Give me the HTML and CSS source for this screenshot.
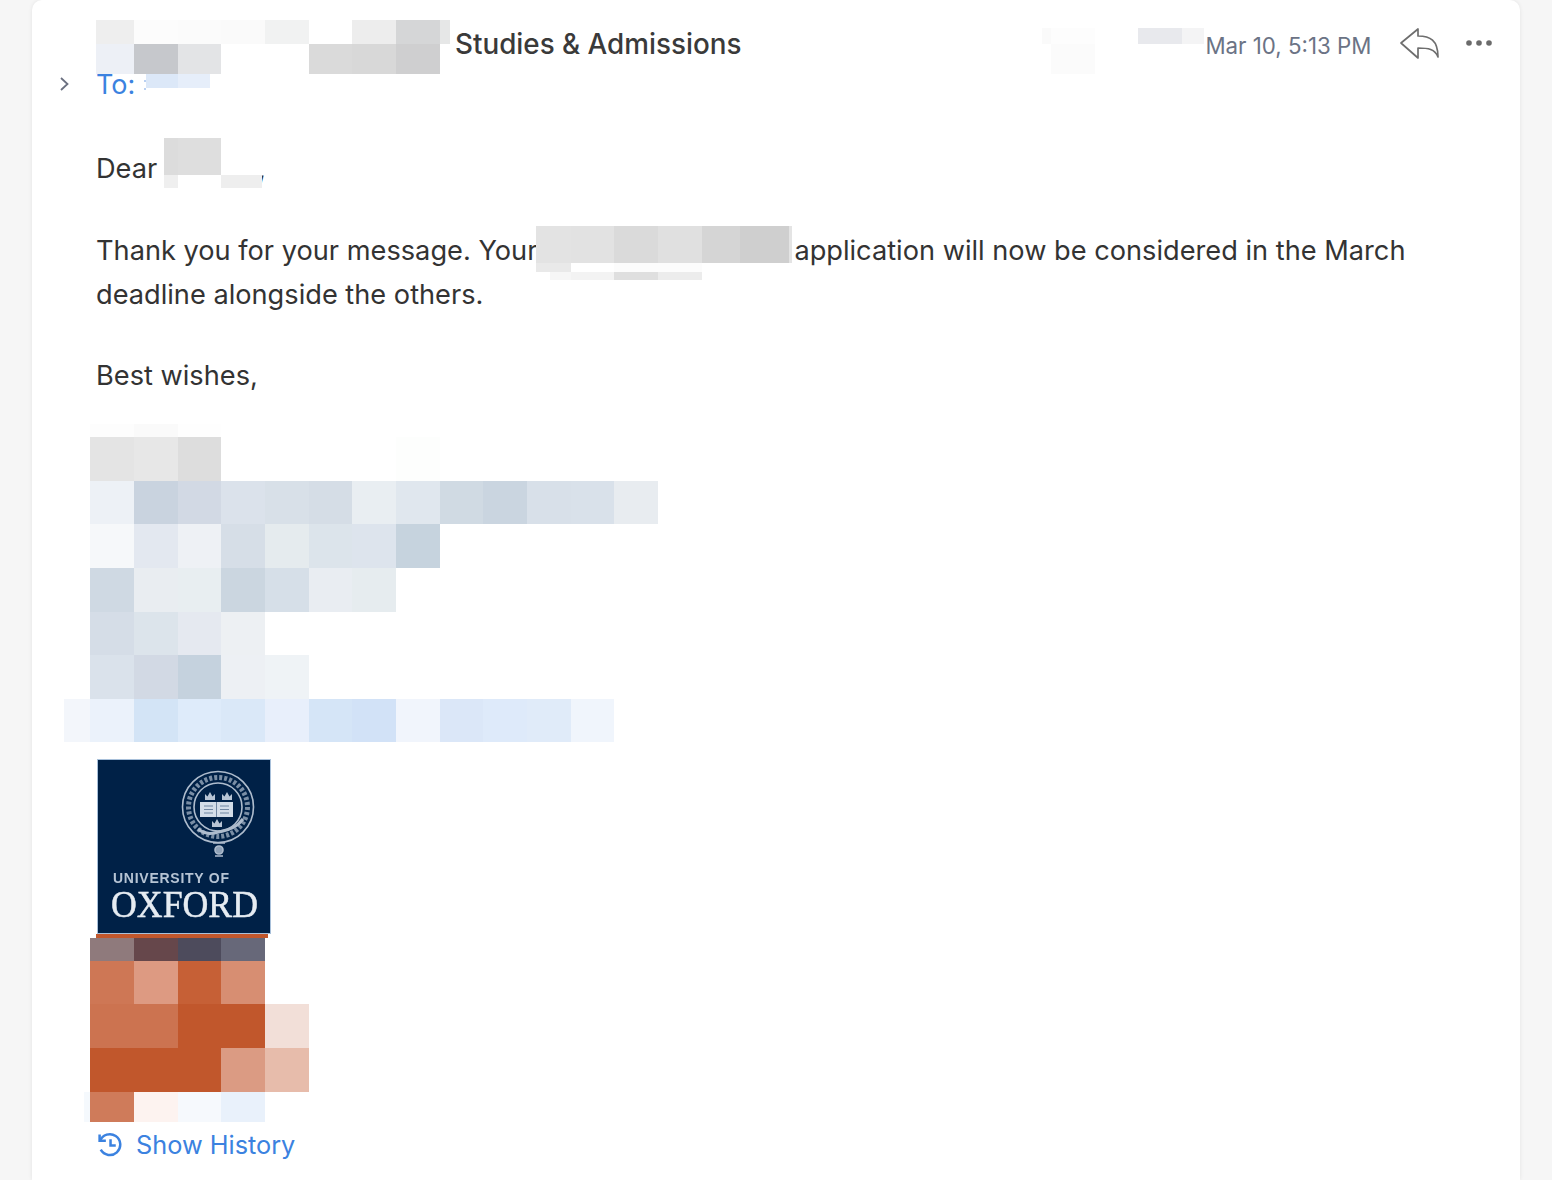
FILE: index.html
```html
<!DOCTYPE html>
<html lang="en">
<head>
<meta charset="utf-8">
<title>Message</title>
<link rel="stylesheet" href="styles.css">
</head>
<body>
<main class="card">
  <header class="head">
    <svg class="mosaic m-sender" viewBox="96 20 354 54" aria-hidden="true">
      <rect x="96" y="20" width="38" height="24" fill="#eeeeee"/><rect x="134" y="20" width="44" height="24" fill="#fcfcfc"/><rect x="178" y="20" width="43" height="24" fill="#fbfbfb"/><rect x="221" y="20" width="44" height="24" fill="#fafafa"/><rect x="265" y="20" width="44" height="24" fill="#f1f2f2"/><rect x="352" y="20" width="44" height="24" fill="#ededed"/><rect x="396" y="20" width="44" height="24" fill="#d5d6d7"/><rect x="440" y="20" width="10" height="24" fill="#e6e7e7"/>
      <rect x="96" y="44" width="38" height="30" fill="#edf0f6"/><rect x="134" y="44" width="44" height="30" fill="#c6c8cc"/><rect x="178" y="44" width="43" height="30" fill="#e3e4e6"/><rect x="309" y="44" width="43" height="30" fill="#dadada"/><rect x="352" y="44" width="44" height="30" fill="#d8d8d8"/><rect x="396" y="44" width="44" height="30" fill="#cfcfd0"/>
    </svg>
    <h1 class="subject">Studies &amp; Admissions</h1>
    <svg class="mosaic m-right" viewBox="1042 28 162 46" aria-hidden="true">
      <rect x="1042" y="28" width="9" height="16" fill="#fafafa"/><rect x="1051" y="28" width="44" height="16" fill="#fdfdfd"/><rect x="1138" y="28" width="44" height="16" fill="#e8e9ed"/><rect x="1182" y="28" width="22" height="16" fill="#f4f4f5"/><rect x="1051" y="44" width="44" height="30" fill="#fbfbfb"/>
    </svg>
    <time class="date">Mar 10, 5:13 PM</time>
    <svg class="reply" viewBox="0 0 40 31" aria-label="Reply"><path d="M1 15 18 1V8C30 8 38 12 38 29 35 21 28 20 18 20V30Z"/></svg>
    <svg class="more" viewBox="0 0 26 6" aria-label="More"><circle cx="3" cy="3" r="2.8"/><circle cx="13" cy="3" r="2.8"/><circle cx="23" cy="3" r="2.8"/></svg>
  </header>

  <div class="recipients">
    <svg class="chevron" viewBox="0 0 9 14" aria-hidden="true"><path d="M1 1 7.500 7 1 13"/></svg>
    <span class="to">To:</span>
    <svg class="mosaic m-to" viewBox="144 74 66 17" aria-hidden="true"><rect x="146" y="74" width="32" height="14" fill="#dce8f8"/><rect x="178" y="74" width="32" height="14" fill="#e6eefa"/><rect x="144" y="80" width="2" height="2" fill="#b9d0f2"/><rect x="144" y="88" width="2" height="2" fill="#b9d0f2"/></svg>
  </div>

  <article class="body">
    <p class="para para-dear">Dear <svg class="mosaic m-dear" viewBox="164 138 98 50" aria-hidden="true"><rect x="164" y="138" width="14" height="37" fill="#dcdcdc"/><rect x="178" y="138" width="43" height="37" fill="#dedede"/><rect x="164" y="175" width="14" height="13" fill="#efefef"/><rect x="221" y="175" width="41" height="13" fill="#eeeeee"/></svg><span class="comma">,</span></p>
    <p class="para para-thanks">Thank you for your message. Your<svg class="mosaic m-thanks" viewBox="536 226 256 54" aria-hidden="true"><rect x="536" y="226" width="35" height="37" fill="#e3e3e3"/><rect x="571" y="226" width="43" height="37" fill="#e2e2e2"/><rect x="614" y="226" width="44" height="37" fill="#dadada"/><rect x="658" y="226" width="44" height="37" fill="#e0e0e0"/><rect x="702" y="226" width="38" height="37" fill="#d5d5d5"/><rect x="740" y="226" width="49" height="37" fill="#cfcfcf"/><rect x="789" y="226" width="3" height="37" fill="#e4e4e4"/><rect x="536" y="263" width="35" height="9" fill="#e9e9e9"/><rect x="614" y="263" width="88" height="9" fill="#fcfcfc"/><rect x="550" y="272" width="21" height="8" fill="#f6f6f6"/><rect x="571" y="272" width="43" height="8" fill="#f3f3f3"/><rect x="614" y="272" width="44" height="8" fill="#dfdfdf"/><rect x="658" y="272" width="44" height="8" fill="#ececec"/></svg>application will now be considered in the March<br>deadline alongside the others.</p>
    <p class="para para-best">Best wishes,</p>
  </article>

  <svg class="mosaic m-sign" viewBox="64 424 594 318" aria-hidden="true">
    <rect x="90" y="424" width="44" height="13" fill="#fdfdfd"/><rect x="134" y="424" width="44" height="13" fill="#fafafa"/><rect x="178" y="424" width="43" height="13" fill="#fefefe"/>
    <rect x="90" y="437" width="44" height="44" fill="#e4e4e4"/><rect x="134" y="437" width="44" height="44" fill="#e7e7e7"/><rect x="178" y="437" width="43" height="44" fill="#dddddd"/><rect x="396" y="437" width="44" height="44" fill="#fdfefd"/>
    <rect x="90" y="481" width="44" height="43" fill="#edf1f6"/><rect x="134" y="481" width="44" height="43" fill="#c9d3df"/><rect x="178" y="481" width="43" height="43" fill="#d2d9e4"/><rect x="221" y="481" width="44" height="43" fill="#dbe2eb"/><rect x="265" y="481" width="44" height="43" fill="#d8e0e8"/><rect x="309" y="481" width="43" height="43" fill="#d5dde6"/><rect x="352" y="481" width="44" height="43" fill="#e9eef2"/><rect x="396" y="481" width="44" height="43" fill="#e0e7ee"/><rect x="440" y="481" width="43" height="43" fill="#d0dae3"/><rect x="483" y="481" width="44" height="43" fill="#cad5e0"/><rect x="527" y="481" width="44" height="43" fill="#d8e0e9"/><rect x="571" y="481" width="43" height="43" fill="#d9e1ea"/><rect x="614" y="481" width="44" height="43" fill="#e8ecf0"/>
    <rect x="90" y="524" width="44" height="44" fill="#f6f8fa"/><rect x="134" y="524" width="44" height="44" fill="#e3e8f0"/><rect x="178" y="524" width="43" height="44" fill="#eef1f5"/><rect x="221" y="524" width="44" height="44" fill="#d6dee7"/><rect x="265" y="524" width="44" height="44" fill="#e5ebee"/><rect x="309" y="524" width="43" height="44" fill="#dce4eb"/><rect x="352" y="524" width="44" height="44" fill="#dde4ed"/><rect x="396" y="524" width="44" height="44" fill="#c6d3de"/>
    <rect x="90" y="568" width="44" height="44" fill="#cfd9e3"/><rect x="134" y="568" width="44" height="44" fill="#e9edf1"/><rect x="178" y="568" width="43" height="44" fill="#e8eef1"/><rect x="221" y="568" width="44" height="44" fill="#cbd6e0"/><rect x="265" y="568" width="44" height="44" fill="#d6dfe8"/><rect x="309" y="568" width="43" height="44" fill="#e9edf2"/><rect x="352" y="568" width="44" height="44" fill="#e6ecef"/>
    <rect x="90" y="612" width="44" height="43" fill="#d5dde7"/><rect x="134" y="612" width="44" height="43" fill="#dce4eb"/><rect x="178" y="612" width="43" height="43" fill="#e5e9f0"/><rect x="221" y="612" width="44" height="43" fill="#edf0f3"/>
    <rect x="90" y="655" width="44" height="44" fill="#dae2eb"/><rect x="134" y="655" width="44" height="44" fill="#d2d9e4"/><rect x="178" y="655" width="43" height="44" fill="#c5d2de"/><rect x="221" y="655" width="44" height="44" fill="#edf0f4"/><rect x="265" y="655" width="44" height="44" fill="#eff3f6"/>
    <rect x="64" y="699" width="26" height="43" fill="#f3f6fb"/><rect x="90" y="699" width="44" height="43" fill="#ebf2fb"/><rect x="134" y="699" width="44" height="43" fill="#d3e4f6"/><rect x="178" y="699" width="43" height="43" fill="#deebfa"/><rect x="221" y="699" width="44" height="43" fill="#dae8f8"/><rect x="265" y="699" width="44" height="43" fill="#e8effb"/><rect x="309" y="699" width="43" height="43" fill="#d5e5f7"/><rect x="352" y="699" width="44" height="43" fill="#d2e2f7"/><rect x="396" y="699" width="44" height="43" fill="#f1f5fc"/><rect x="440" y="699" width="43" height="43" fill="#dbe7f8"/><rect x="483" y="699" width="44" height="43" fill="#deeafa"/><rect x="527" y="699" width="44" height="43" fill="#e0ebf9"/><rect x="571" y="699" width="43" height="43" fill="#f0f5fc"/>
  </svg>

  <svg class="logo" viewBox="0 0 174 175" role="img" aria-label="University of Oxford">
    <defs><filter id="soft" x="-5%" y="-5%" width="110%" height="110%"><feGaussianBlur stdDeviation="0.6"/></filter></defs>
    <rect x="0.5" y="0.5" width="173" height="174" fill="#002147" stroke="#a8c0da"/>
    <g filter="url(#soft)">
      <g class="crest">
        <circle cx="121" cy="48" r="35.5"/><circle cx="121" cy="48" r="24"/>
        <circle class="legend" cx="121" cy="48" r="29.5"/>
        <circle class="knot" cx="122" cy="91" r="4"/><path d="M116 84H128M118 97H126"/>
      </g>
      <path class="ribbon" d="M101 70C110 77 118 74 126 72S140 68 146 60"/>
      <path class="crown" d="M108 41H118V35L115.500 37.500 113 33 110.500 37.500 108 35ZM125 41H135V35L132.500 37.500 130 33 127.500 37.500 125 35ZM115 68H125V62L122.500 64.500 120 60 117.500 64.500 115 62Z"/>
      <path class="book" d="M103 43H136V58H103Z"/>
      <path class="book-lines" d="M119.500 43V58M107 47H116M107 50.500H116M107 54H116M123 47H132M123 50.500H132M123 54H132"/>
      <text class="logo-uni" x="16" y="124" textLength="116" lengthAdjust="spacing">UNIVERSITY OF</text>
      <text class="logo-ox" x="14" y="158" textLength="147" lengthAdjust="spacingAndGlyphs">OXFORD</text>
    </g>
  </svg>

  <svg class="mosaic m-orange" viewBox="84 934 225 188" aria-hidden="true">
    <rect x="96" y="934" width="172" height="4" fill="#c1572c"/>
    <rect x="90" y="938" width="44" height="23" fill="#8f7a7c"/><rect x="134" y="938" width="44" height="23" fill="#66474b"/><rect x="178" y="938" width="43" height="23" fill="#4d4b5c"/><rect x="221" y="938" width="44" height="23" fill="#676879"/>
    <rect x="90" y="961" width="44" height="43" fill="#ce7755"/><rect x="134" y="961" width="44" height="43" fill="#dd9a82"/><rect x="178" y="961" width="43" height="43" fill="#c66036"/><rect x="221" y="961" width="44" height="43" fill="#d78e72"/>
    <rect x="90" y="1004" width="88" height="44" fill="#cc7350"/><rect x="178" y="1004" width="87" height="44" fill="#c1572c"/><rect x="265" y="1004" width="44" height="44" fill="#f2dfd8"/>
    <rect x="90" y="1048" width="131" height="44" fill="#c1572c"/><rect x="221" y="1048" width="44" height="44" fill="#db9b83"/><rect x="265" y="1048" width="44" height="44" fill="#e7bcab"/>
    <rect x="84" y="1092" width="6" height="30" fill="#f5f9fd"/><rect x="90" y="1092" width="44" height="30" fill="#cf7b5a"/><rect x="134" y="1092" width="44" height="30" fill="#fdf3f0"/><rect x="178" y="1092" width="43" height="30" fill="#f6f9fd"/><rect x="221" y="1092" width="44" height="30" fill="#e9f1fb"/>
  </svg>

  <a class="history" href="#">
    <svg class="history-icon" viewBox="0 0 24 24" aria-hidden="true"><path d="M2.500 2.500V8.500H8.500"/><path d="M3 8.500A10 10 0 1 1 3.600 17"/><path d="M13 7V13H18"/></svg>
    <span>Show History</span>
  </a>
</main>
</body>
</html>
```

FILE: styles.css
```css
* {
  box-sizing: border-box;
}

html,
body {
  margin: 0;
  height: 1180px;
  overflow: hidden;
  background: #f6f6f6;
}

body {
  padding: 0 32px;
  font-family: Inter, "Liberation Sans", sans-serif;
  color: #333333;
}

.card {
  height: 1180px;
  padding-top: 20px;
  background: #ffffff;
  border-radius: 10px 10px 0 0;
  box-shadow: 0 0 4px rgba(0, 0, 0, 0.08);
}

.mosaic {
  display: block;
  flex: none;
  shape-rendering: crispEdges;
}

.head {
  display: flex;
  align-items: flex-start;
  height: 54px;
  padding-left: 64px;
}

.m-sender {
  width: 354px;
  height: 54px;
}

.subject {
  margin: 0 0 0 5px;
  font-size: 27.8px;
  font-weight: 500;
  line-height: 49px;
  color: #3a3a3a;
}

.m-right {
  width: 162px;
  height: 46px;
  margin: 8px 0 0 301px;
}

.date {
  margin-left: 1px;
  font-size: 22.3px;
  line-height: 52px;
  color: #6b7385;
}

.reply {
  flex: none;
  width: 40px;
  height: 31px;
  margin: 8px 0 0 29px;
  fill: none;
  stroke: #6e6e6e;
  stroke-width: 1.7;
  stroke-linejoin: round;
}

.more {
  flex: none;
  width: 26px;
  height: 6px;
  margin: 20px 0 0 26px;
  fill: #6b6b6b;
}

.recipients {
  display: flex;
  align-items: flex-start;
  height: 22px;
  padding-left: 28px;
}

.chevron {
  flex: none;
  width: 9px;
  height: 14px;
  margin-top: 3px;
  fill: none;
  stroke: #6b7080;
  stroke-width: 1.8;
}

.to {
  margin-left: 27px;
  font-size: 27px;
  line-height: 22px;
  color: #3b82e0;
}

.m-to {
  width: 66px;
  height: 17px;
  margin-left: 9px;
}

.body {
  padding: 51px 60px 0 64px;
}

.para {
  margin: 0;
  font-size: 27.2px;
  line-height: 44px;
}

.para-thanks {
  margin-top: 38px;
}

.para-best {
  margin-top: 37px;
}

.para .mosaic {
  display: inline-block;
  vertical-align: top;
}

.m-dear {
  position: relative;
  width: 98px;
  height: 50px;
  margin: -9px 0 0 -1px;
}

.comma {
  margin-left: -4px;
}

.m-thanks {
  width: 256px;
  height: 54px;
  margin: -3px 2px -7px -1px;
}

.m-sign {
  width: 594px;
  height: 318px;
  margin: 26px 0 0 32px;
}

.logo {
  display: block;
  width: 174px;
  height: 175px;
  margin: 17px 0 0 65px;
}

.crest {
  fill: none;
  stroke: #aebccd;
  stroke-width: 1.6;
}

.crest .legend {
  stroke-width: 5;
  stroke-dasharray: 3 2;
  opacity: 0.7;
}

.crest .knot {
  fill: #8fa2b8;
}

.ribbon {
  fill: none;
  stroke: #aebccd;
  stroke-width: 3;
}

.crown {
  fill: #b7c4d4;
}

.book {
  fill: #d3dde8;
}

.book-lines {
  fill: none;
  stroke: #6f86a1;
  stroke-width: 1;
}

.logo-uni {
  font-family: "Liberation Sans", sans-serif;
  font-size: 14px;
  font-weight: 700;
  fill: #b6c4d4;
}

.logo-ox {
  font-family: "Liberation Serif", serif;
  font-size: 37px;
  fill: #e6ecf2;
  stroke: #e6ecf2;
  stroke-width: 0.5;
}

.m-orange {
  width: 225px;
  height: 188px;
  margin-left: 52px;
}

.history {
  display: flex;
  align-items: center;
  gap: 14px;
  height: 44px;
  padding-left: 66px;
  font-size: 25.3px;
  color: #3b82e0;
  text-decoration: none;
}

.history-icon {
  flex: none;
  width: 25px;
  height: 25px;
  margin-left: -1px;
  fill: none;
  stroke: #3b82e0;
  stroke-width: 2.4;
}
```
